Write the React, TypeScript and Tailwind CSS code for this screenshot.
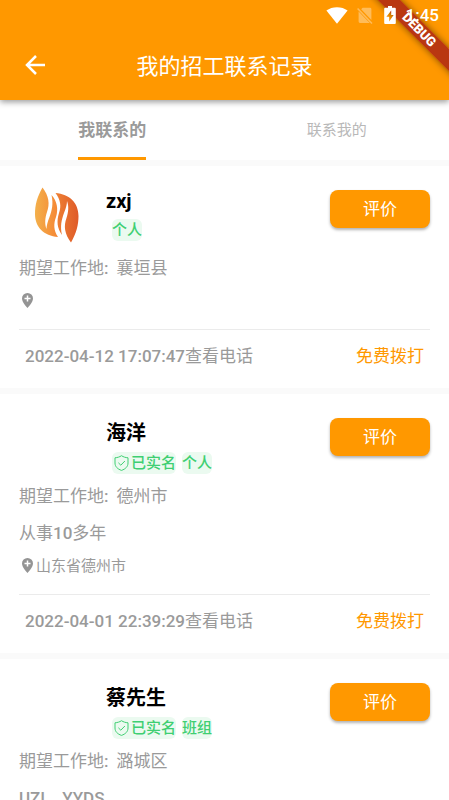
import { useState } from "react";

type Contact = {
  name: string;
  verified: boolean;
  kind: string;
  place: string;
  about?: string;
  address?: string;
  time: string;
  avatar?: boolean;
};

const contacts: Contact[] = [
  { name: "zxj", verified: false, kind: "个人", place: "襄垣县", time: "2022-04-12 17:07:47", avatar: true },
  {
    name: "海洋",
    verified: true,
    kind: "个人",
    place: "德州市",
    about: "从事10多年",
    address: "山东省德州市",
    time: "2022-04-01 22:39:29",
  },
  {
    name: "蔡先生",
    verified: true,
    kind: "班组",
    place: "潞城区",
    about: "UZI、YYDS",
    address: "山西省长治市",
    time: "2022-04-01 21:16:05",
  },
];

function StatusBar() {
  return (
    <div className="relative z-30 flex h-[30px] items-center justify-end pr-[10px] text-white">
      <svg className="mr-[9px] h-[17px] w-[22px]" viewBox="0 0 22 17" fill="currentColor" aria-hidden="true">
        <path d="M0.4 3.6C3.4 1.4 7 0.2 11 0.2S18.6 1.4 21.6 3.6L11 16.8Z" />
      </svg>
      <svg className="mr-[11px] h-[17px] w-[16px] opacity-35" viewBox="0 0 16 17" aria-hidden="true">
        <path d="M5.6 0.8H13a1.4 1.4 0 0 1 1.4 1.4V13L4.2 2.3ZM1.6 4.6L12.8 16H3a1.4 1.4 0 0 1-1.4-1.4Z" fill="currentColor" />
        <path d="M0.6 1.6L15 16.4" stroke="currentColor" strokeWidth="1.5" />
      </svg>
      <svg className="mr-[10px] h-[18px] w-[12px]" viewBox="0 0 12 18" fill="currentColor" aria-hidden="true">
        <path
          fillRule="evenodd"
          d="M4 0h4v1.8h2.8a1 1 0 0 1 1 1V17a1 1 0 0 1-1 1H1.2a1 1 0 0 1-1-1V2.8a1 1 0 0 1 1-1H4ZM7.2 4.6L2.4 10.8H5.2V15.4L9.6 9H7.2Z"
        />
      </svg>
      <span className="text-[17px] leading-5 font-medium">1:45</span>
    </div>
  );
}

function DebugBanner() {
  return (
    <div className="pointer-events-none absolute top-0 right-0 z-20 flex h-[60px] w-[60px] items-center justify-center">
      <div className="w-[140px] shrink-0 rotate-45 bg-[#a21717]/75 text-center font-['Roboto'] text-[13px] leading-[16px] font-black text-white shadow-[0_0_7px_rgba(0,0,0,0.5)]">
        DEBUG
      </div>
    </div>
  );
}

function FlameLogo() {
  return (
    <svg className="h-[56px] w-[44px]" viewBox="0 0 44 56" aria-hidden="true">
      <defs>
        <linearGradient id="flame" x1="0" y1="0" x2="1" y2="0">
          <stop offset="0" stopColor="#f3b04b" />
          <stop offset="1" stopColor="#f58634" />
        </linearGradient>
        <linearGradient id="ember" x1="0" y1="0" x2="1" y2="0">
          <stop offset="0" stopColor="#ee8134" />
          <stop offset="1" stopColor="#df5a28" />
        </linearGradient>
      </defs>
      <path
        d="M7.5 0.5C2 10 0 18 0 27C0 40 9 49 23 50C18.5 43 18.5 37 21 30C23.5 22 22 14 16.500 8C18.500 17 17 23 14.500 30C12.500 35 11.500 39 11.500 42C9.500 37 10 31 12 25C15 17 14 9 7.500 0.500Z"
        fill="url(#flame)"
      />
      <path
        d="M36 55.5C41.5 46 43.5 38 43.5 29C43.5 16 34.500 7 20.500 6C25.500 13 26.500 19 24 26C21.500 34 22 41 27 48C25 39 26.500 33 29 26C31 21 32 17 32 14C34 19 33.500 25 31.500 31C28.500 39 29.500 47 36 55.500Z"
        fill="url(#ember)"
      />
    </svg>
  );
}

function ShieldCheck() {
  return (
    <svg className="h-[16px] w-[15px]" viewBox="0 0 15 16" fill="none" stroke="currentColor" aria-hidden="true">
      <path d="M7.5 0.7C9.5 2 11.5 2.6 14 2.8V8C14 11.6 11.5 14 7.5 15.4C3.5 14 1 11.6 1 8V2.8C3.5 2.6 5.5 2 7.5 0.7Z" />
      <path d="M4.4 7.8L6.8 10.2L10.9 6" />
    </svg>
  );
}

function Pin() {
  return (
    <svg className="mt-[6px] h-[15px] w-[11px] text-[#949494]" viewBox="0 0 11 15" aria-hidden="true">
      <path d="M5.5 0A5.5 5.5 0 0 0 0 5.5C0 9.4 5.5 15 5.5 15S11 9.4 11 5.5A5.5 5.5 0 0 0 5.5 0Z" fill="currentColor" />
      <path d="M5.5 2.4V8.4M2.5 5.4H8.5" stroke="#fff" strokeWidth="1.5" />
    </svg>
  );
}

/* Digits and Latin letters are set one weight heavier than the Chinese text around them. */
function MixedText({ text }: { text: string }) {
  return (
    <>
      {text.split(/([\x20-\x7e]+)/).map((part, i) => (
        <span key={i} className={i % 2 ? "font-medium" : "font-normal"}>
          {part}
        </span>
      ))}
    </>
  );
}

function Card({ c }: { c: Contact }) {
  return (
    <article className="mb-[6px] bg-white px-[19px] text-[#9a9a9a]">
      <div className="flex h-[83px] items-start">
        <div className="flex w-[75px] shrink-0 justify-center pt-[21px]">{c.avatar && <FlameLogo />}</div>
        <div className="ml-3 flex-1 pt-[23px]">
          <h2 className="text-[20px] leading-[normal] font-bold text-black">{c.name}</h2>
          <div className="mt-[6px] ml-[6px] flex gap-[6px] text-[15px] leading-[22px] font-medium text-[#3fcf72]">
            {c.verified && (
              <span className="flex items-center gap-[2px] rounded-md bg-[#ebfaf0] pl-[2px]">
                <ShieldCheck />
                已实名
              </span>
            )}
            <span className="rounded-md bg-[#ebfaf0]">{c.kind}</span>
          </div>
        </div>
        <button
          type="button"
          className="mt-[24px] h-[38px] w-[100px] rounded-lg bg-[#ff9800] pt-[2px] text-[17px] text-white shadow-[0_2px_3px_rgba(0,0,0,0.3)]"
        >
          评价
        </button>
      </div>
      <p className="flex gap-[8px] text-[17px] leading-[38px]">
        <span>
          <MixedText text="期望工作地:" />
        </span>
        <span>{c.place}</span>
      </p>
      {c.about && (
        <p className="text-[17px] leading-[37px]">
          <MixedText text={c.about} />
        </p>
      )}
      <div className="mb-[14px] flex min-h-7 items-start gap-[3px] pl-[3px]">
        <Pin />
        {c.address && <span className="text-[15px] leading-7">{c.address}</span>}
      </div>
      <div className="flex justify-between border-t border-[#ebebeb] px-[6px] pb-[6px] text-[17px] leading-[52px]">
        <span>
          <MixedText text={`${c.time}查看电话`} />
        </span>
        <button type="button" className="text-[#ff9800]">
          免费拨打
        </button>
      </div>
    </article>
  );
}

export default function App() {
  const [tab, setTab] = useState(0);
  return (
    <div className="relative flex h-screen flex-col overflow-hidden bg-[#fafafa] font-['Roboto','Noto_Sans_CJK_SC',sans-serif]">
      <header className="relative bg-[#ff9800] shadow-[0_2px_6px_rgba(0,0,0,0.4)]">
        <StatusBar />
        <div className="grid h-[70px] grid-cols-[70px_1fr_70px] items-center text-white">
          <button type="button" aria-label="返回" className="flex h-full items-center justify-center">
            <svg className="h-5 w-5" viewBox="0 0 20 20" fill="none" stroke="currentColor" strokeWidth="2.5" aria-hidden="true">
              <path d="M20 10H2M11 1L2 10L11 19" />
            </svg>
          </button>
          <h1 className="pt-1 text-center text-[22px] leading-8">我的招工联系记录</h1>
        </div>
        <DebugBanner />
      </header>
      <nav className="mb-[6px] flex h-[60px] shrink-0 bg-white">
        {["我联系的", "联系我的"].map((label, i) => (
          <button
            key={label}
            type="button"
            onClick={() => setTab(i)}
            className="flex flex-1 justify-center"
          >
            <span
              className={
                tab === i
                  ? "h-[60px] border-b-[3px] border-[#ff9800] text-[17px] leading-[60px] font-bold text-[#9a9a9a]"
                  : "h-[60px] text-[15px] leading-[60px] text-[#b8b8b8]"
              }
            >
              {label}
            </span>
          </button>
        ))}
      </nav>
      <main className="min-h-0 flex-1 overflow-y-auto [scrollbar-width:none]">
        {contacts.map((c) => (
          <Card key={c.name} c={c} />
        ))}
      </main>
    </div>
  );
}
